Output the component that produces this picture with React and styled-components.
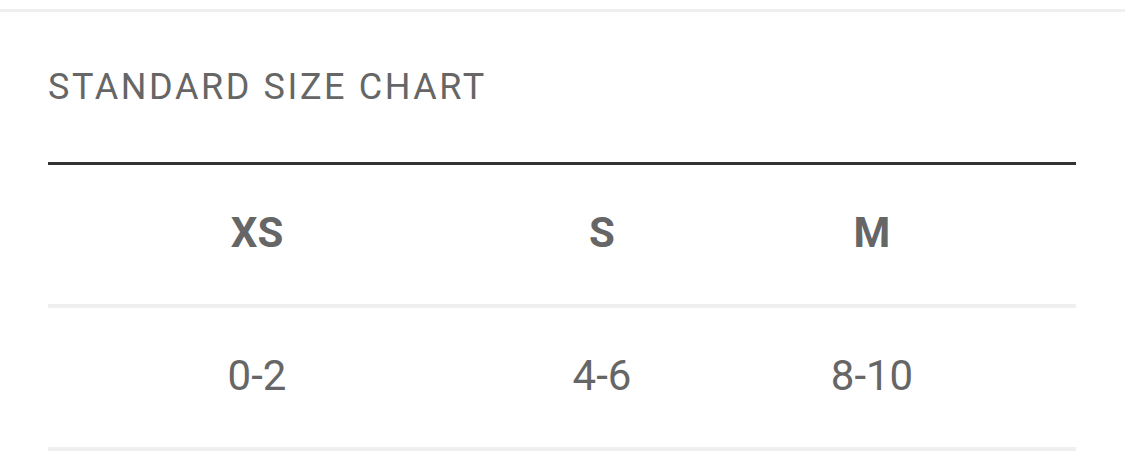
import React from "react";
import styled, { createGlobalStyle } from "styled-components";

const sizes = [
  { label: "XS", value: "0-2" },
  { label: "S", value: "4-6" },
  { label: "M", value: "8-10" },
];

const GlobalStyle = createGlobalStyle`
  html, body {
    margin: 0;
    padding: 0;
    background: #ffffff;
  }
  body {
    font-family: Roboto, "Liberation Sans", Arial, sans-serif;
  }
`;

const Page = styled.div`
  width: 1125px;
  height: 463px;
  overflow: hidden;
  padding-top: 9px;
  box-sizing: border-box;
`;

const TopRule = styled.div`
  height: 3px;
  background: #efefef;
`;

const Section = styled.section`
  padding: 0 49px 0 48px;
`;

const Title = styled.h2`
  margin: 0;
  padding-top: 54px;
  height: 150px;
  box-sizing: border-box;
  font-size: 36px;
  font-weight: 400;
  line-height: 42px;
  color: #666666;
  letter-spacing: 2.6px;
`;

const Table = styled.div`
  border-top: 3px solid #333333;
  display: grid;
  grid-template-columns: 418px 272px 268px 1fr;
`;

const Cell = styled.div`
  height: 143px;
  box-sizing: border-box;
  padding-bottom: 4px;
  display: flex;
  align-items: center;
  justify-content: center;
  font-size: 42px;
  font-weight: ${(p) => (p.$head ? 700 : 400)};
  color: #666666;
  border-bottom: 4px solid #efefef;
`;

export default function App() {
  return (
    <>
      <GlobalStyle />
      <Page>
        <TopRule />
        <Section>
          <Title>STANDARD SIZE CHART</Title>
          <Table>
            {sizes.map((s) => (
              <Cell key={s.label} $head>
                {s.label}
              </Cell>
            ))}
            <Cell $head />
            {sizes.map((s) => (
              <Cell key={s.value}>{s.value}</Cell>
            ))}
            <Cell />
          </Table>
        </Section>
      </Page>
    </>
  );
}
